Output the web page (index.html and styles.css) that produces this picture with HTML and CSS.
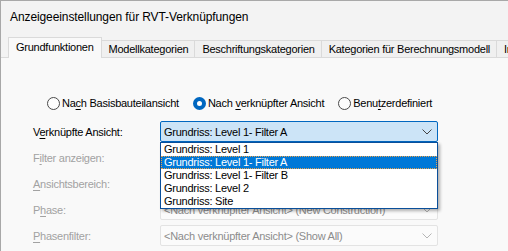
FILE: index.html
```html
<!DOCTYPE html>
<html lang="de">
<head>
    <meta charset="UTF-8">
    <title>Anzeigeeinstellungen für RVT-Verknüpfungen</title>
    <link rel="stylesheet" href="styles.css">
</head>
<body>
<div class="dialog">
    <!-- Title -->
    <div class="titlebar">Anzeigeeinstellungen für RVT-Verknüpfungen</div>

    <!-- Tabs -->
    <div class="tabs">
        <div class="tab active">Grundfunktionen</div>
        <div class="tab">Modellkategorien</div>
        <div class="tab">Beschriftungskategorien</div>
        <div class="tab">Kategorien für Berechnungsmodell</div>
        <div class="tab">Importierte Kategorien</div>
    </div>

    <!-- Panel -->
    <div class="panel">
        <div class="radios">
            <label class="radio"><span class="circle"></span><span>Na<u>c</u>h Basisbauteilansicht</span></label>
            <label class="radio checked"><span class="circle"></span><span>Nach <u>v</u>erknüpfter Ansicht</span></label>
            <label class="radio"><span class="circle"></span><span>Benu<u>t</u>zerdefiniert</span></label>
        </div>

        <div class="form">
            <div class="label"><span>V<u>e</u>rknüpfte Ansicht:</span></div>
            <div class="combo focused">
                <span>Grundriss: Level 1- Filter A</span>
                <svg class="chevron" width="10" height="6" viewBox="0 0 10 6"><polyline points="0.5,0.5 5,5 9.5,0.5" fill="none" stroke="#444" stroke-width="1"/></svg>
                <ul class="dropdown">
                    <li>Grundriss: Level 1</li>
                    <li class="selected">Grundriss: Level 1- Filter A</li>
                    <li>Grundriss: Level 1- Filter B</li>
                    <li>Grundriss: Level 2</li>
                    <li>Grundriss: Site</li>
                </ul>
            </div>

            <div class="label disabled"><span>F<u>i</u>lter anzeigen:</span></div>
            <div class="combo disabled"></div>

            <div class="label disabled"><span><u>A</u>nsichtsbereich:</span></div>
            <div class="combo disabled"></div>

            <div class="label disabled"><span>P<u>h</u>ase:</span></div>
            <div class="combo disabled">
                <span>&lt;Nach verknüpfter Ansicht&gt; (New Construction)</span>
                <svg class="chevron" width="10" height="6" viewBox="0 0 10 6"><polyline points="0.5,0.5 5,5 9.5,0.5" fill="none" stroke="#b5b5b5" stroke-width="1"/></svg>
            </div>

            <div class="label disabled"><span><u>P</u>hasenfilter:</span></div>
            <div class="combo disabled">
                <span>&lt;Nach verknüpfter Ansicht&gt; (Show All)</span>
                <svg class="chevron" width="10" height="6" viewBox="0 0 10 6"><polyline points="0.5,0.5 5,5 9.5,0.5" fill="none" stroke="#b5b5b5" stroke-width="1"/></svg>
            </div>
        </div>
    </div>
</div>
</body>
</html>
```

FILE: styles.css
```css
* {
    box-sizing: border-box;
    margin: 0;
    padding: 0;
}

body {
    width: 508px;
    height: 251px;
    overflow: hidden;
    font-family: 'Liberation Sans', Arial, sans-serif;
    font-size: 11px;
    letter-spacing: -0.25px;
    color: #000;
    background-color: #f3f3f3;
}

.dialog {
    display: flex;
    flex-direction: column;
    width: 508px;
    height: 251px;
    overflow: hidden;
    border-top: 1px solid #a8a8a8;
    border-left: 1px solid #a8a8a8;
    background-color: #f3f3f3;
}

/* Title */
.titlebar {
    height: 37px;
    line-height: 33px;
    padding-left: 9px;
    font-size: 12px;
    letter-spacing: -0.1px;
    white-space: nowrap;
}

/* Tabs */
.tabs {
    display: flex;
    align-items: flex-end;
    flex-shrink: 0;
    height: 20px;
    padding-left: 7px;
    border-bottom: 1px solid #dadada;
    white-space: nowrap;
}

.tab {
    height: 17px;
    line-height: 16px;
    padding: 0 6px 0 7px;
    border: 1px solid #dadada;
    border-bottom: none;
    border-left: none;
    background-color: #f0f0f0;
    flex-shrink: 0;
}

.tab.active {
    position: relative;
    height: 21px;
    line-height: 19px;
    margin-bottom: -1px;
    padding: 0 7px;
    border-left: 1px solid #dadada;
    background-color: #f9f9f9;
}

/* Panel */
.panel {
    flex: 1;
    background-color: #f9f9f9;
    padding: 38px 0 0 32px;
}

.radios {
    display: flex;
    gap: 14px;
    padding-left: 14px;
    height: 14px;
    align-items: center;
}

.radio {
    display: flex;
    align-items: center;
    gap: 2px;
    white-space: nowrap;
}

.circle {
    width: 13px;
    height: 13px;
    border: 1px solid #4a4a4a;
    border-radius: 50%;
    background-color: #fdfdfd;
}

.radio.checked .circle {
    border: 4px solid #0067c0;
    background-color: #fff;
}

u {
    text-decoration-thickness: 1px;
    text-underline-offset: 2px;
}

.form {
    display: grid;
    grid-template-columns: 127px 278px;
    grid-auto-rows: 21px;
    row-gap: 5px;
    margin-top: 11px;
}

.label {
    display: flex;
    align-items: center;
    white-space: nowrap;
}

.label.disabled {
    color: #a2a2a2;
}

.combo {
    position: relative;
    display: flex;
    align-items: center;
    justify-content: space-between;
    padding: 0 5px 0 3px;
    border: 1px solid #e3e3e3;
    border-radius: 2px;
    background-color: #fbfbfb;
    white-space: nowrap;
}

.combo.focused {
    border-color: #0067c0;
    background-color: #cce4f7;
}

.combo.disabled {
    color: #8c8c8c;
}

.chevron {
    flex-shrink: 0;
}

/* Open list */
.dropdown {
    position: absolute;
    top: 20px;
    left: -1px;
    width: 278px;
    list-style: none;
    border: 1px solid #0a4f9a;
    background-color: #fff;
    box-shadow: 2px 2px 3px rgba(0, 0, 0, 0.3);
    z-index: 2;
}

.dropdown li {
    height: 13px;
    line-height: 13px;
    padding-left: 3px;
    color: #000;
}

.dropdown li.selected {
    background-color: #0078d7;
    color: #fff;
    outline: 1px dotted #e8a04a;
    outline-offset: -1px;
}
```
